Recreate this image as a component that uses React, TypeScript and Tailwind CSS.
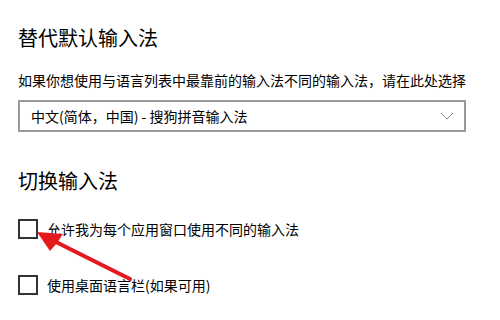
import React from "react";

export default function App() {
  return (
    <div
      className="relative w-[500px] h-[320px] bg-white overflow-hidden text-black"
      style={{ fontFamily: '"Noto Sans CJK SC", "Noto Sans", sans-serif' }}
    >
      <div className="pl-[18px] pr-[34px] pt-[24px] flex flex-col">
        <div className="text-[20px] leading-[28px] font-normal">替代默认输入法</div>
        <div className="mt-[18px] text-[14px] leading-[20px] whitespace-nowrap">
          如果你想使用与语言列表中最靠前的输入法不同的输入法，请在此处选择
        </div>
        <div className="mt-[10px] w-[448px] h-[32px] border-2 border-[#999999] flex items-center justify-between pl-[11px] pr-[10px]">
          <span className="text-[14px] leading-[20px]">中文(简体，中国) - 搜狗拼音输入法</span>
          <svg width="14" height="8" viewBox="0 0 14 8">
            <path d="M1 1 L7 7 L13 1" fill="none" stroke="#8a8a8a" strokeWidth="1" />
          </svg>
        </div>
        <div className="mt-[35px] text-[20px] leading-[28px] font-normal">切换输入法</div>
        <div className="mt-[24px] flex items-center h-[20px]">
          <div className="w-[20px] h-[20px] border-2 border-[#333333] shrink-0" />
          <span className="ml-[9px] text-[14px] leading-[20px]">允许我为每个应用窗口使用不同的输入法</span>
        </div>
        <div className="mt-[36px] flex items-center h-[20px]">
          <div className="w-[20px] h-[20px] border-2 border-[#333333] shrink-0" />
          <span className="ml-[9px] text-[14px] leading-[20px]">使用桌面语言栏(如果可用)</span>
        </div>
      </div>
      <svg className="absolute left-0 top-0 pointer-events-none" width="500" height="320" viewBox="0 0 500 320">
        <path d="M130 279 L56 242" stroke="#e3191c" strokeWidth="4" strokeLinecap="round" fill="none" />
        <polygon points="37,232 63,234 57,243 50,251" fill="#e3191c" />
      </svg>
    </div>
  );
}
